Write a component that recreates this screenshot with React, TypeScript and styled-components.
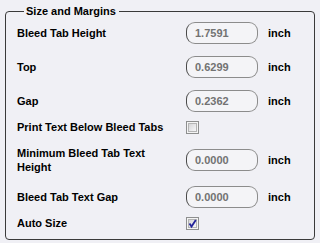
import React from 'react'
import styled, { createGlobalStyle } from 'styled-components'

const GlobalStyle = createGlobalStyle`
  html, body {
    margin: 0;
    padding: 0;
    background: #f0f0f5;
  }
  body {
    font-family: 'Liberation Sans', Arial, sans-serif;
    font-size: 11px;
    font-weight: bold;
    color: #000000;
  }
`

const Page = styled.div`
  padding: 5px 5px 4px 5px;
`

const Group = styled.fieldset`
  margin: 0;
  padding: 0 0 9px 11px;
  border: 1px solid #3a3a3a;
  border-radius: 4px;
  min-width: 0;
`

const Legend = styled.legend`
  margin-left: 7px;
  padding: 0 3px 0 2px;
  line-height: 13px;
  font-size: 11px;
`

const List = styled.div`
  display: flex;
  flex-direction: column;
  padding-top: 4px;
`

const Row = styled.div<{ $check?: boolean }>`
  display: grid;
  grid-template-columns: 160px 72px auto;
  column-gap: 9px;
  align-items: center;
  margin-top: ${p => (p.$check ? '8px' : '12px')};

  &:first-child {
    margin-top: 0;
  }
`

const Label = styled.div`
  line-height: 14px;
`

const ValueBox = styled.input`
  box-sizing: border-box;
  width: 72px;
  height: 22px;
  margin: 0;
  padding: 0 0 0 8px;
  border: 1px solid #8c8c8c;
  border-left-color: #4a4a4a;
  border-radius: 9px;
  background: #f4f4f7;
  font-family: 'Liberation Sans', Arial, sans-serif;
  font-size: 11px;
  font-weight: bold;
  color: #727272;
  outline: none;
`

const Unit = styled.span`
  padding-left: 1px;
`

const CheckBox = styled.div`
  box-sizing: border-box;
  width: 13px;
  height: 13px;
  border: 1px solid #8e8f8f;
  padding: 1px;
  background: #f4f4f4;
  display: flex;
`

const CheckFace = styled.div`
  flex: 1;
  border: 1px solid #b4b4b4;
  background: linear-gradient(135deg, #d6d6d8 0%, #f6f6f8 100%);
  position: relative;
`

const Tick = styled.svg`
  position: absolute;
  left: -2px;
  top: -2px;
`

interface Field {
  label: string
  value?: string
  checked?: boolean
}

const fields: Field[] = [
  { label: 'Bleed Tab Height', value: '1.7591' },
  { label: 'Top', value: '0.6299' },
  { label: 'Gap', value: '0.2362' },
  { label: 'Print Text Below Bleed Tabs', checked: false },
  { label: 'Minimum Bleed Tab Text Height', value: '0.0000' },
  { label: 'Bleed Tab Text Gap', value: '0.0000' },
  { label: 'Auto Size', checked: true }
]

function Check ({ checked }: { checked: boolean }) {
  return (
    <CheckBox>
      <CheckFace>
        {checked && (
          <Tick width='11' height='11' viewBox='0 0 11 11'>
            <path d='M2.5 5.5 L4.5 8.5 L8.8 2' fill='none' stroke='#23239a' strokeWidth='1.8' />
          </Tick>
        )}
      </CheckFace>
    </CheckBox>
  )
}

export default function App () {
  return (
    <Page>
      <GlobalStyle />
      <Group>
        <Legend>Size and Margins</Legend>
        <List>
          {fields.map(f => (
            <Row key={f.label} $check={f.value === undefined}>
              <Label>{f.label}</Label>
              {f.value !== undefined ? (
                <>
                  <ValueBox readOnly defaultValue={f.value} />
                  <Unit>inch</Unit>
                </>
              ) : (
                <Check checked={!!f.checked} />
              )}
            </Row>
          ))}
        </List>
      </Group>
    </Page>
  )
}
